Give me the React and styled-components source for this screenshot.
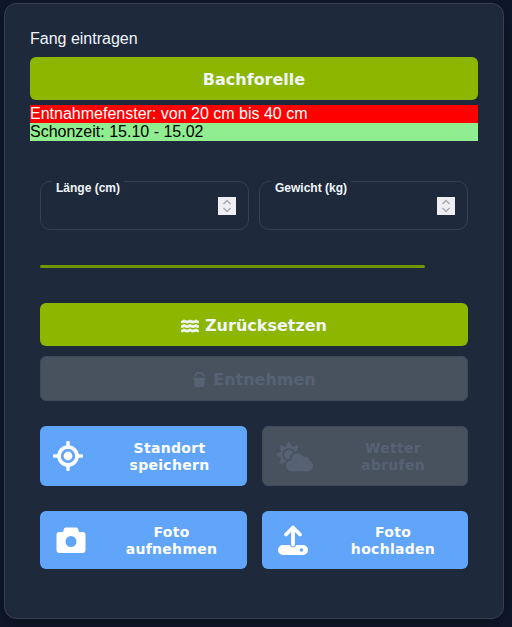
import React from 'react'
import styled, { createGlobalStyle } from 'styled-components'
import { FaCloudSun } from 'react-icons/fa'
import { FaBucket, FaWater } from 'react-icons/fa6'

const GlobalStyle = createGlobalStyle`
  html, body {
    margin: 0;
    padding: 0;
    background: #0f172a;
    font-family: "Liberation Sans", Arial, sans-serif;
  }
  * { box-sizing: border-box; }
`

const Page = styled.div`
  width: 512px;
  height: 627px;
  padding: 3px 8px 8px 4px;
  overflow: hidden;
`

const Card = styled.main`
  height: 616px;
  background: #1e293b;
  border: 1px solid #334155;
  border-radius: 12px;
  padding: 25px 25px 0;
  box-shadow: 0 4px 12px rgba(0, 0, 0, 0.3);
`

const Title = styled.h2`
  margin: 0 0 9px;
  height: 19px;
  font-size: 16px;
  line-height: 19px;
  font-weight: 400;
  color: #f1f5f9;
`

const Button = styled.button`
  display: flex;
  align-items: center;
  justify-content: center;
  gap: 6px;
  width: 100%;
  padding: 2px 0 0;
  border-radius: 6px;
  font-family: "DejaVu Sans", Verdana, sans-serif;
  font-weight: 700;
  font-size: 16px;
  color: #f1f5f9;
  background: #8db600;
  border: none;
  height: 43px;
`

const FishButton = styled(Button)`
  margin-bottom: 5px;
`

const InfoLine = styled.div`
  height: 18px;
  font-size: 16px;
  line-height: 18px;
  color: ${p => p.$color};
  background: ${p => p.$bg};
`

const Inner = styled.div`
  padding: 0 10px;
`

const FieldRow = styled.div`
  display: grid;
  grid-template-columns: 209px 209px;
  gap: 10px;
  margin-top: 26px;
`

const Field = styled.fieldset`
  margin: 0;
  height: 63px;
  padding: 0 12px 0 11px;
  border: 1px solid #334155;
  border-radius: 10px;
  display: flex;
  align-items: flex-start;
  min-width: 0;
`

const Legend = styled.legend`
  padding: 14px 4px 0;
  font-size: 12px;
  line-height: 14px;
  font-weight: 700;
  color: #f1f5f9;
`

const NumberInput = styled.input`
  flex: 1;
  min-width: 0;
  height: 18px;
  margin-top: 2px;
  padding: 0;
  background: transparent;
  border: none;
  outline: none;
  color: #f1f5f9;
  font-size: 14px;
  appearance: textfield;

  &::-webkit-inner-spin-button {
    display: none;
  }
`

const Spinner = styled.svg`
  flex: none;
  width: 18px;
  height: 18px;
  margin-top: 2px;
  background: #efeff3;
  color: #a9a9b4;
`

const Progress = styled.div`
  width: 385px;
  height: 3px;
  margin: 35px 0;
  border-radius: 2px;
  background: #6f9600;
`

const Stack = styled.div`
  display: flex;
  flex-direction: column;
  gap: 10px;
`

const DisabledButton = styled(Button)`
  height: 45px;
  background: #47525e;
  border: 1px solid #3d4a5c;
  color: #566273;
`

const WaterIcon = styled(FaWater)`
  stroke: currentColor;
  stroke-width: 28px;
`

const ActionGrid = styled.div`
  display: grid;
  grid-template-columns: 207px 206px;
  column-gap: 15px;
  row-gap: 25px;
  margin-top: 25px;
`

const ActionButton = styled.button`
  display: grid;
  grid-template-columns: 56px 1fr;
  align-items: center;
  height: ${p => p.$h}px;
  padding: 2px 0 0;
  border-radius: 6px;
  border: ${p => (p.disabled ? '1px solid #3d4a5c' : 'none')};
  background: ${p => (p.disabled ? '#47525e' : '#60a5fa')};
  color: ${p => (p.disabled ? '#566273' : '#ffffff')};
  font-family: "DejaVu Sans", Verdana, sans-serif;
  font-weight: 700;
  font-size: 14px;
  line-height: 17px;
  letter-spacing: 0.3px;
`

const IconSlot = styled.span`
  display: flex;
  justify-content: center;
  margin-top: -2px;
  padding-left: ${p => p.$pad}px;
  font-size: 37px;
`

const ActionLabel = styled.span`
  text-align: center;
  padding-right: ${p => p.$pad || 0}px;
`

const LocateIcon = () => (
  <svg width="30" height="30" viewBox="0 0 30 30" fill="none" stroke="currentColor">
    <circle cx="15" cy="15" r="9" strokeWidth="3.600" />
    <circle cx="15" cy="15" r="4.400" fill="currentColor" stroke="none" />
    <path d="M15 1.500v5M15 23.500v5M1.500 15h5M23.500 15h5" strokeWidth="3.400" strokeLinecap="round" />
  </svg>
)

const CameraIcon = () => (
  <svg width="30" height="30" viewBox="0 0 30 30" fill="currentColor">
    <path fillRule="evenodd" d="M10 2.500h10c1 0 1.600.5 2 1.300L23 7h3.500A3 3 0 0 1 29.500 10v15a3 3 0 0 1-3 3h-23a3 3 0 0 1-3-3V10a3 3 0 0 1 3-3H7l1-3.200c.4-.8 1-1.300 2-1.300ZM15 11a5.500 5.500 0 1 0 0 11 5.500 5.500 0 0 0 0-11Z" />
  </svg>
)

const UploadIcon = () => (
  <svg width="30" height="30" viewBox="0 0 30 30" fill="currentColor">
    <path d="M15 19.500V2.500M8 9.500 15 2.500 22 9.500" fill="none" stroke="currentColor" strokeWidth="3.800" strokeLinecap="round" strokeLinejoin="round" />
    <path fillRule="evenodd" d="M5 20h6.800c.6 1.600 1.700 2.300 3.200 2.300s2.600-.7 3.200-2.300H25a5 5 0 0 1 0 10H5a5 5 0 0 1 0-10Zm18.500 3.300a1.700 1.700 0 1 0 0 3.400 1.700 1.700 0 0 0 0-3.400Z" />
  </svg>
)

const StepArrows = () => (
  <Spinner viewBox="0 0 18 18" fill="none" stroke="currentColor" strokeWidth="1.500">
    <path d="M5.500 7 9 3.500 12.500 7M5.500 11 9 14.500 12.500 11" />
  </Spinner>
)

const actions = [
  { label: ['Standort', 'speichern'], icon: <LocateIcon />, h: 60, iconPad: 0, labelPad: 4 },
  { label: ['Wetter', 'abrufen'], icon: <FaCloudSun />, h: 60, iconPad: 7, disabled: true },
  { label: ['Foto', 'aufnehmen'], icon: <CameraIcon />, h: 58, iconPad: 5 },
  { label: ['Foto', 'hochladen'], icon: <UploadIcon />, h: 58, iconPad: 6 },
]

const App = () => {
  return (
    <Page>
      <GlobalStyle />
      <Card>
        <Title>Fang eintragen</Title>
        <FishButton>Bachforelle</FishButton>
        <InfoLine $bg="#ff0000" $color="#ffffff">Entnahmefenster: von 20 cm bis 40 cm</InfoLine>
        <InfoLine $bg="#90ee90" $color="#000000">Schonzeit: 15.10 - 15.02</InfoLine>

        <Inner>
          <FieldRow>
            <Field>
              <Legend>Länge (cm)</Legend>
              <NumberInput type="number" />
              <StepArrows />
            </Field>
            <Field>
              <Legend>Gewicht (kg)</Legend>
              <NumberInput type="number" />
              <StepArrows />
            </Field>
          </FieldRow>

          <Progress />

          <Stack>
            <Button><WaterIcon size={18} />Zurücksetzen</Button>
            <DisabledButton disabled><FaBucket size={15} />Entnehmen</DisabledButton>
          </Stack>

          <ActionGrid>
            {actions.map(a => (
              <ActionButton key={a.label.join(' ')} $h={a.h} disabled={a.disabled}>
                <IconSlot $pad={a.iconPad}>{a.icon}</IconSlot>
                <ActionLabel $pad={a.labelPad}>{a.label[0]}<br />{a.label[1]}</ActionLabel>
              </ActionButton>
            ))}
          </ActionGrid>
        </Inner>
      </Card>
    </Page>
  )
}

export default App
